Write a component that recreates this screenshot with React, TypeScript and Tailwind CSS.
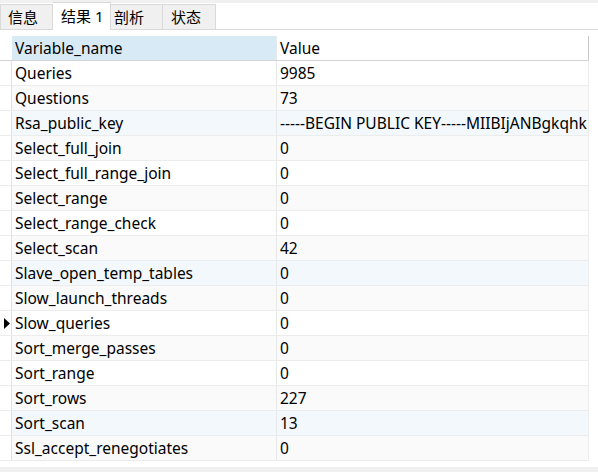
import React from "react";

const rows: [string, string][] = [
  ["Queries", "9985"],
  ["Questions", "73"],
  ["Rsa_public_key", "-----BEGIN PUBLIC KEY-----MIIBIjANBgkqhk"],
  ["Select_full_join", "0"],
  ["Select_full_range_join", "0"],
  ["Select_range", "0"],
  ["Select_range_check", "0"],
  ["Select_scan", "42"],
  ["Slave_open_temp_tables", "0"],
  ["Slow_launch_threads", "0"],
  ["Slow_queries", "0"],
  ["Sort_merge_passes", "0"],
  ["Sort_range", "0"],
  ["Sort_rows", "227"],
  ["Sort_scan", "13"],
  ["Ssl_accept_renegotiates", "0"],
];

const blue = new Set([2, 8, 14]);

export default function App() {
  return (
    <div
      className="relative w-[598px] h-[472px] overflow-hidden bg-white text-black"
      style={{ fontFamily: '"Noto Sans", "Noto Sans CJK SC", sans-serif' }}
    >
      <div className="h-[3px] bg-[#f0f0f0]" />
      {/* tab bar */}
      <div className="relative h-[27px] border-b border-[#d9d9d9] flex items-end">
        <div className="w-[53px] h-[25px] bg-[#f0f0f0] border border-b-0 border-[#d9d9d9] text-[15px] leading-[24px] pl-[7px]">
          信息
        </div>
        <div className="relative w-[58px] h-[28px] -mb-px bg-white border border-b-0 border-l-0 border-[#d9d9d9] text-[15px] leading-[27px] pl-[8px] z-10">
          结果 1
        </div>
        <div className="w-[52px] h-[25px] bg-[#f0f0f0] border border-b-0 border-l-0 border-[#d9d9d9] text-[15px] leading-[24px] pl-[3px]">
          剖析
        </div>
        <div className="w-[53px] h-[25px] bg-[#f0f0f0] border border-b-0 border-l-0 border-[#d9d9d9] text-[15px] leading-[24px] pl-[8px]">
          状态
        </div>
      </div>
      <div className="h-[6px]" />
      {/* grid */}
      <div className="w-[589px] text-[15.5px]">
        <div className="flex h-[25px] border-b border-[#d4d4d4]">
          <div className="w-[12px] shrink-0 bg-white" />
          <div className="w-[265px] shrink-0 bg-[#d9eaf7] border-r border-[#e8e8e8] pl-[3px] leading-[24px]">
            Variable_name
          </div>
          <div className="w-[312px] shrink-0 border-r border-[#c8c8c8] pl-[3px] leading-[24px] bg-white">
            Value
          </div>
        </div>
        {rows.map(([k, v], i) => (
          <div
            key={k}
            className={
              "flex h-[25px] border-b border-[#ececec] " +
              (blue.has(i) ? "bg-[#f3f8fd]" : i % 2 === 1 ? "bg-[#fafafa]" : "bg-white")
            }
          >
            <div className="relative w-[12px] shrink-0 bg-white border-r border-[#e0e0e0]">
              {k === "Slow_queries" && (
                <svg className="absolute left-[4px] top-[7px]" width="6" height="11" viewBox="0 0 6 11">
                  <path d="M0 0 L6 5.5 L0 11 Z" fill="#000" />
                </svg>
              )}
            </div>
            <div className="w-[265px] shrink-0 border-r border-[#e8e8e8] pl-[3px] leading-[24px] whitespace-nowrap overflow-hidden">
              {k}
            </div>
            <div className="w-[312px] shrink-0 border-r border-[#ececec] pl-[3px] leading-[24px] whitespace-nowrap overflow-hidden">
              {v}
            </div>
          </div>
        ))}
      </div>
      <div className="absolute left-0 right-0 bottom-0 h-[5px] bg-[#f0f0f0]" />
    </div>
  );
}
